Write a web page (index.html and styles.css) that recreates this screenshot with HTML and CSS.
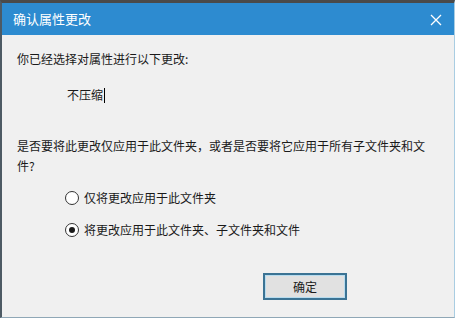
FILE: index.html
```html
<!DOCTYPE html>
<html lang="zh-CN">
<head>
<meta charset="utf-8">
<link rel="stylesheet" href="styles.css">
</head>
<body>
<div class="window">
  <div class="titlebar">
    <span class="title">确认属性更改</span>
    <svg class="close" width="12" height="12" viewBox="0 0 12 12"><path d="M1 1 L11 11 M11 1 L1 11" stroke="#fff" stroke-width="1.3" fill="none"/></svg>
  </div>
  <div class="content">
    <p class="intro">你已经选择对属性进行以下更改:</p>
    <p class="value"><span>不压缩</span><span class="caret"></span></p>
    <p class="question">是否要将此更改仅应用于此文件夹，或者是否要将它应用于所有子文件夹和文件?</p>
    <div class="options">
      <label class="option"><span class="radio"></span>仅将更改应用于此文件夹</label>
      <label class="option"><span class="radio checked"></span>将更改应用于此文件夹、子文件夹和文件</label>
    </div>
    <div class="actions">
      <button class="btn">确定</button>
    </div>
  </div>
</div>
</body>
</html>
```
FILE: styles.css
```css
html, body {
  margin: 0;
  padding: 0;
  background: #ffffff;
}
body {
  font-family: "Noto Sans CJK SC", "Liberation Sans", sans-serif;
  font-size: 12px;
  color: #1a1a1a;
}
.window {
  width: 452px;
  height: 314px;
  border-top: 3px solid #4a4a4a;
  border-left: 2px solid #4d5a64;
  border-right: 1px solid #a9cde2;
  border-bottom: 1px solid #8fa7b6;
  background: #f0f0f0;
  display: flex;
  flex-direction: column;
}
.titlebar {
  height: 32px;
  background: #2d8bd0;
  display: flex;
  align-items: center;
  justify-content: space-between;
  padding: 0 12px 0 11px;
  flex-shrink: 0;
}
.title {
  color: #ffffff;
  font-size: 13px;
  line-height: 20px;
}
.close {
  display: block;
  margin-top: 1px;
}
.content {
  padding: 0 14px 0 15px;
}
p {
  margin: 0;
  line-height: 20px;
}
.intro {
  margin-top: 14px;
}
.value {
  margin-top: 16px;
  padding-left: 50px;
  display: flex;
  align-items: center;
}
.caret {
  display: inline-block;
  width: 1px;
  height: 15px;
  background: #000;
  margin-left: 1px;
}
.question {
  margin-top: 31px;
  width: 425px;
}
.options {
  margin-top: 12px;
  padding-left: 48px;
  display: flex;
  flex-direction: column;
  gap: 12px;
}
.option {
  display: flex;
  align-items: center;
  line-height: 20px;
  gap: 5px;
}
.radio {
  width: 12px;
  height: 12px;
  border: 1px solid #333;
  border-radius: 50%;
  background: #fff;
  box-sizing: content-box;
  position: relative;
  flex-shrink: 0;
}
.radio.checked::after {
  content: "";
  position: absolute;
  left: 3px;
  top: 3px;
  width: 6px;
  height: 6px;
  border-radius: 50%;
  background: #1a1a1a;
}
.actions {
  margin-top: 33px;
  padding-left: 246px;
}
.btn {
  width: 84px;
  height: 27px;
  border: 2px solid #3b7394;
  box-shadow: inset 0 0 0 1px #b7dcef;
  background: #e1e1e1;
  font-family: inherit;
  font-size: 12px;
  color: #1a1a1a;
  padding: 0;
  margin: 0;
}
```
